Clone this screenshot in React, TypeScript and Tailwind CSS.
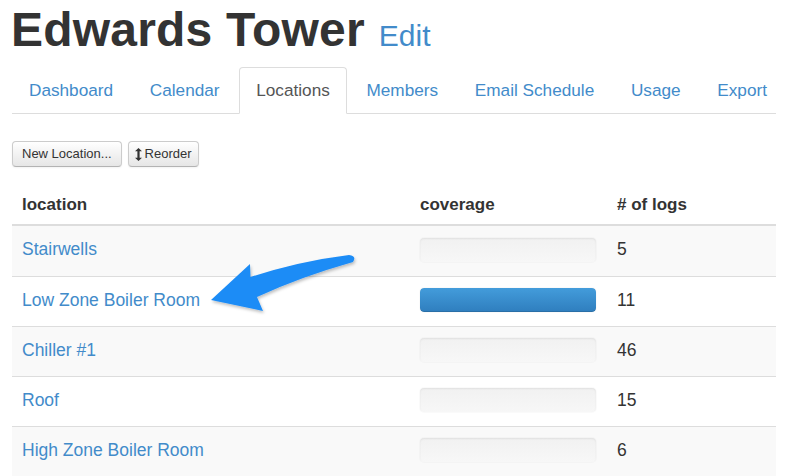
import React from "react";

const tabs = ["Dashboard", "Calendar", "Locations", "Members", "Email Schedule", "Usage", "Export"];

const rows = [
  { name: "Stairwells", coverage: 0, logs: 5 },
  { name: "Low Zone Boiler Room", coverage: 100, logs: 11 },
  { name: "Chiller #1", coverage: 0, logs: 46 },
  { name: "Roof", coverage: 0, logs: 15 },
  { name: "High Zone Boiler Room", coverage: 0, logs: 6 },
];

function ResizeIcon() {
  return (
    <svg width="7" height="13" viewBox="0 0 7 13" className="shrink-0">
      <path d="M3.5 0 L7 3.2 H4.6 V9.8 H7 L3.5 13 L0 9.8 H2.4 V3.2 H0 Z" fill="#333" />
    </svg>
  );
}

function Arrow() {
  return (
    <svg className="pointer-events-none absolute left-0 top-0" width="788" height="476" viewBox="0 0 788 476">
      <defs>
        <filter id="sh" x="-20%" y="-20%" width="140%" height="140%">
          <feDropShadow dx="1" dy="2" stdDeviation="1.5" floodColor="#000" floodOpacity="0.25" />
        </filter>
      </defs>
      <path
        d="M211 300 L250 264 L250.5 277 Q300 261 349 255 Q357 256 353 262 Q300 277 257 297 L263 311 Z"
        fill="#1e8cf6"
        filter="url(#sh)"
      />
    </svg>
  );
}

export default function App() {
  return (
    <div className="relative h-[476px] w-[788px] overflow-hidden bg-white px-3 text-[#333] font-['Liberation_Sans',Arial,sans-serif]">
      <h1 className="mt-[3px] flex h-[53px] items-baseline gap-[14px] leading-[53px]">
        <span className="ml-[-1px] text-[48px] font-bold tracking-[0.2px]">Edwards Tower</span>
        <a className="text-[30px] text-[#428bca]">Edit</a>
      </h1>

      <ul className="mt-[11px] flex border-b border-[#ddd]">
        {tabs.map((t) => {
          const active = t === "Locations";
          return (
            <li key={t} className="mr-[2.7px] -mb-px">
              <a
                className={`block whitespace-nowrap rounded-t-[4px] border px-4 py-3 text-[17.2px] leading-[21px] ${
                  active
                    ? "border-[#ddd] border-b-white bg-white text-[#555]"
                    : "border-transparent text-[#428bca]"
                }`}
              >
                {t}
              </a>
            </li>
          );
        })}
      </ul>

      <div className="mt-[27px] flex gap-[6px]">
        <button className="h-[26px] rounded-[4px] border border-[#ccc] border-b-[#b3b3b3] bg-gradient-to-b from-white to-[#e6e6e6] px-[9px] text-[13px] text-[#333] shadow-[inset_0_1px_0_rgba(255,255,255,0.2),0_1px_2px_rgba(0,0,0,0.05)]">
          New Location...
        </button>
        <button className="flex h-[26px] items-center gap-[3px] rounded-[4px] border border-[#ccc] border-b-[#b3b3b3] bg-gradient-to-b from-white to-[#e6e6e6] px-[6px] text-[13px] text-[#333] shadow-[inset_0_1px_0_rgba(255,255,255,0.2),0_1px_2px_rgba(0,0,0,0.05)]">
          <ResizeIcon />
          Reorder
        </button>
      </div>

      <div className="mt-[20px]">
        <div className="grid grid-cols-[398px_197px_1fr] border-b-2 border-[#ddd] text-[17px] font-bold leading-[22px]">
          <div className="px-[10px] pt-[7px] pb-[8px]">location</div>
          <div className="px-[10px] pt-[7px] pb-[8px]">coverage</div>
          <div className="px-[10px] pt-[7px] pb-[8px]"># of logs</div>
        </div>
        {rows.map((r, i) => (
          <div
            key={r.name}
            className={`grid h-[50px] grid-cols-[398px_197px_1fr] items-center pb-[3px] text-[17.5px] ${
              i > 0 ? "border-t border-[#ddd]" : ""
            } ${i % 2 === 0 ? "bg-[#f9f9f9]" : "bg-white"}`}
          >
            <div className="px-[10px]">
              <a className="text-[#428bca]">{r.name}</a>
            </div>
            <div className="px-[10px]">
              <div className="h-[24px] w-[176px] overflow-hidden rounded-[4px] bg-gradient-to-b from-[#f1f1f1] to-[#f7f7f7] shadow-[inset_0_1px_2px_rgba(0,0,0,0.07),0_0_0_1px_rgba(0,0,0,0.02)]">
                <div
                  className="h-full rounded-[4px] bg-gradient-to-b from-[#439cdb] to-[#2f7ebe] shadow-[inset_0_-1px_0_rgba(0,0,0,0.12)]"
                  style={{ width: `${r.coverage}%` }}
                />
              </div>
            </div>
            <div className="px-[10px]">{r.logs}</div>
          </div>
        ))}
      </div>

      <Arrow />
    </div>
  );
}
